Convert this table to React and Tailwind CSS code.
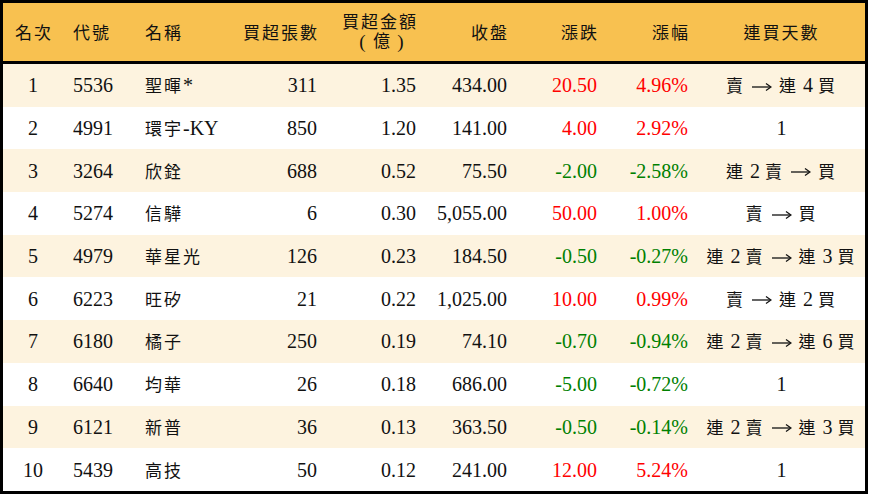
import React from "react";

const rows = [
  ["1", "5536", "聖暉*", "311", "1.35", "434.00", "20.50", "4.96%", "賣 → 連 4 買"],
  ["2", "4991", "環宇-KY", "850", "1.20", "141.00", "4.00", "2.92%", "1"],
  ["3", "3264", "欣銓", "688", "0.52", "75.50", "-2.00", "-2.58%", "連 2 賣 → 買"],
  ["4", "5274", "信驊", "6", "0.30", "5,055.00", "50.00", "1.00%", "賣 → 買"],
  ["5", "4979", "華星光", "126", "0.23", "184.50", "-0.50", "-0.27%", "連 2 賣 → 連 3 買"],
  ["6", "6223", "旺矽", "21", "0.22", "1,025.00", "10.00", "0.99%", "賣 → 連 2 買"],
  ["7", "6180", "橘子", "250", "0.19", "74.10", "-0.70", "-0.94%", "連 2 賣 → 連 6 買"],
  ["8", "6640", "均華", "26", "0.18", "686.00", "-5.00", "-0.72%", "1"],
  ["9", "6121", "新普", "36", "0.13", "363.50", "-0.50", "-0.14%", "連 2 賣 → 連 3 買"],
  ["10", "5439", "高技", "50", "0.12", "241.00", "12.00", "5.24%", "1"],
];

const cjk = /[\u3000-\u9fff\uff00-\uffef]/;

const Arrow = () => (
  <svg width="20" height="10" viewBox="0 0 20 10" className="inline-block align-middle -mt-[2px] mx-[2px]">
    <path d="M0 5H18" stroke="#111" strokeWidth="1.3" />
    <path d="M14 1.5L19 5L14 8.5" fill="none" stroke="#111" strokeWidth="1.3" />
  </svg>
);

// wrap CJK runs so they sit a bit smaller with spacing, like the Ming glyphs
function Txt({ s }) {
  return s.split(/([\u3000-\u9fff\uff00-\uffef]+|→)/).map((p, i) =>
    p === "→" ? (
      <Arrow key={i} />
    ) : cjk.test(p) ? (
      <span key={i} className="text-[17px] tracking-[2px]">
        {p}
      </span>
    ) : (
      p
    )
  );
}

const cols = "grid grid-cols-[60px_72px_95px_97px_99px_91px_90px_91px_167px]";

const App = () => {
  return (
    <div className="w-[868px] h-[494px] border-[3px] border-black bg-white text-[20px] text-[#111] font-['Liberation_Serif','Noto_Sans_CJK_TC',serif]">
      <div className={`${cols} h-[58px] bg-[#f8c150] border-b-[3px] border-black items-center box-content`}>
        <div className="text-center pl-[2px]"><Txt s="名次" /></div>
        <div className="pl-[10px]"><Txt s="代號" /></div>
        <div className="pl-[10px]"><Txt s="名稱" /></div>
        <div className="text-right pr-[8px]"><Txt s="買超張數" /></div>
        <div className="flex justify-end pr-[8px] -mt-[2px]">
          <div className="flex flex-col items-center leading-[19px]">
            <div><Txt s="買超金額" /></div>
            <div className="flex text-[17px] pl-[3px]">
              <span className="w-[19px] text-center text-[19px]">(</span>
              <span className="w-[19px] text-center">億</span>
              <span className="w-[19px] text-center text-[19px]">)</span>
            </div>
          </div>
        </div>
        <div className="text-right pr-[8px]"><Txt s="收盤" /></div>
        <div className="text-right pr-[8px]"><Txt s="漲跌" /></div>
        <div className="text-right pr-[8px]"><Txt s="漲幅" /></div>
        <div className="text-center"><Txt s="連買天數" /></div>
      </div>
      {rows.map((r, i) => {
        const neg = r[6].startsWith("-");
        const tone = neg ? "text-[#008000]" : "text-[#ff0000]";
        return (
          <div
            key={r[0]}
            className={`${cols} h-[42.7px] items-center ${i % 2 === 0 ? "bg-[#fdf3df]" : "bg-white"}`}
          >
            <div className="text-center">{r[0]}</div>
            <div className="pl-[10px]">{r[1]}</div>
            <div className="pl-[10px]"><Txt s={r[2]} /></div>
            <div className="text-right pr-[10px]">{r[3]}</div>
            <div className="text-right pr-[10px]">{r[4]}</div>
            <div className="text-right pr-[10px]">{r[5]}</div>
            <div className={`text-right pr-[10px] ${tone}`}>{r[6]}</div>
            <div className={`text-right pr-[10px] ${tone}`}>{r[7]}</div>
            <div className="text-center"><Txt s={r[8]} /></div>
          </div>
        );
      })}
    </div>
  );
};

export default App;
